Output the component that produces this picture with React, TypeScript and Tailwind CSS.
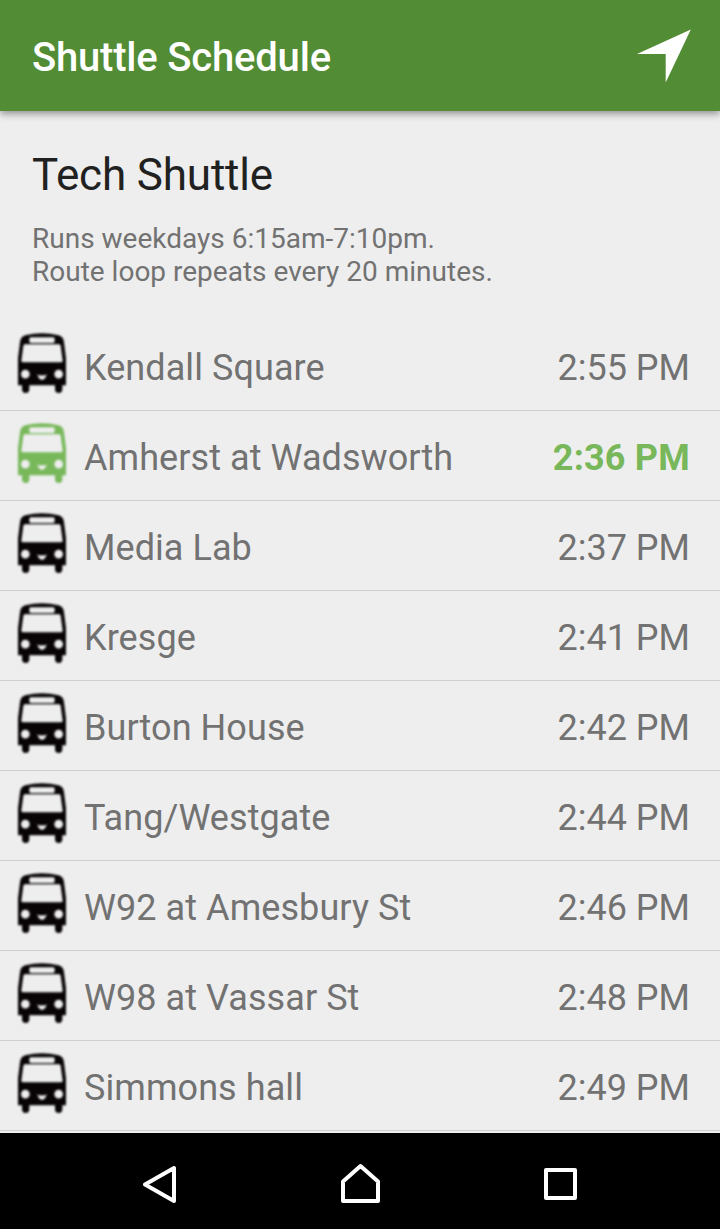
const stops = [
  ["Kendall Square", "2:55 PM"],
  ["Amherst at Wadsworth", "2:36 PM"],
  ["Media Lab", "2:37 PM"],
  ["Kresge", "2:41 PM"],
  ["Burton House", "2:42 PM"],
  ["Tang/Westgate", "2:44 PM"],
  ["W92 at Amesbury St", "2:46 PM"],
  ["W98 at Vassar St", "2:48 PM"],
  ["Simmons hall", "2:49 PM"],
];

function Bus() {
  return (
    <svg className="blur-[0.8px]" width="52" height="62" viewBox="48 21 156 186" fill="currentColor">
      <path
        fillRule="evenodd"
        d="M60 52 Q61 36 76 31 Q126 19 176 31 Q191 36 192 52 L198 100 V181 H187 V192 Q187 204 176 204 Q165 204 165 192 V181 H88 V192 Q88 204 77 204 Q66 204 66 192 V181 H54 V100 Z M92 37 Q88 37 88 42 V49 Q88 54 93 54 H159 Q164 54 164 49 V42 Q164 37 160 37 Z M74 58 Q71 58 70 63 L64 107 Q64 112 69 112 H183 Q188 112 188 107 L182 63 Q181 58 178 58 Z M76 134.5 A13 13 0 1 0 76 160.500 A13 13 0 1 0 76 134.5 Z M176 134.5 A13 13 0 1 0 176 160.500 A13 13 0 1 0 176 134.5 Z M112 148 Q120 154 126 150 Q132 154 140 148 Q137 163 126 165 Q115 163 112 148 Z"
      />
    </svg>
  );
}

export default function App() {
  return (
    <div className="flex h-[1229px] w-[720px] flex-col overflow-hidden bg-[#eeeeee] font-['Roboto',sans-serif]">
      <header className="z-10 flex h-[111px] shrink-0 items-center justify-between bg-[#528c34] pr-[29px] pl-8 shadow-[0_3px_7px_rgba(0,0,0,0.38)]">
        <h1 className="pt-1 text-[40px] font-medium tracking-[-0.2px] text-white">Shuttle Schedule</h1>
        <svg width="54" height="54" viewBox="0 0 54 54" fill="white">
          <path d="M53.8 0.6 L0 25 H28.7 V53.6 Z" />
        </svg>
      </header>
      <section className="h-[210px] shrink-0 px-8 pt-[38px]">
        <h2 className="text-[44px] leading-[52px] tracking-[-0.17px] text-[#212121]">Tech Shuttle</h2>
        <p className="mt-[21px] text-[28px] leading-[33px] text-[#727272]">Runs weekdays 6:15am-7:10pm.<br />Route loop repeats every 20 minutes.</p>
      </section>
      <ul className="min-h-0 flex-1 overflow-hidden">
        {stops.map(([name, time], i) => (
          <li key={name} className="flex h-[90px] items-center border-b border-[#cfcfcf] pr-[30px] pl-4 text-[36px] text-[#727272]">
            <span className={i === 1 ? "mb-[5px] flex text-[#78b85b]" : "mb-[5px] flex text-[#080406]"}><Bus /></span>
            <span className="ml-4 flex-1 pt-1 tracking-[0.07px]">{name}</span>
            <span className={i === 1 ? "pt-1 font-bold tracking-[0.2px] text-[#78b85b]" : "pt-1"}>{time}</span>
          </li>
        ))}
      </ul>
      <nav className="flex h-24 shrink-0 items-center bg-black pt-[6px]">
        <svg width="720" height="60" viewBox="0 0 720 60" fill="none" stroke="white" strokeWidth="4" strokeLinejoin="round">
          <path d="M174 14 V47 L145 30.5 Z M343 27.5 L360.5 12 L378 27.5 V47 H343 Z M546 16 H575 V44 H546 Z" />
        </svg>
      </nav>
    </div>
  );
}
